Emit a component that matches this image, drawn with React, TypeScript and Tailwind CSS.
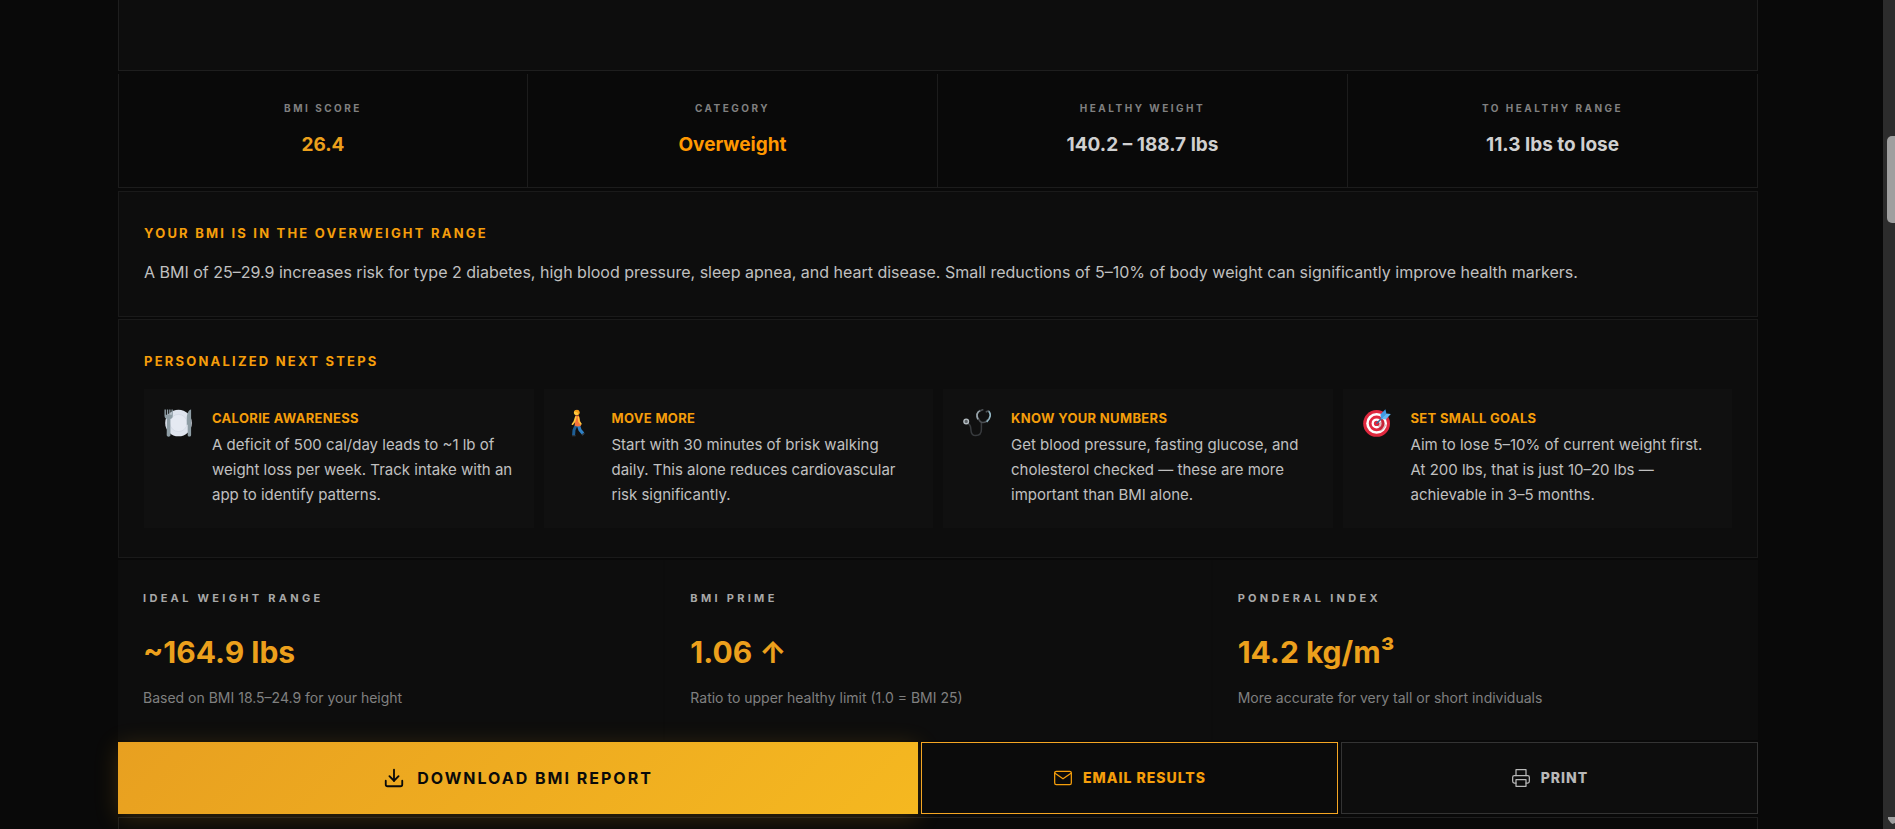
import type { ReactNode } from 'react';
import { FiDownload, FiMail, FiPrinter } from 'react-icons/fi';

interface Stat {
  label: string;
  value: string;
  color: string;
}

interface Step {
  icon: ReactNode;
  title: string;
  text: string;
}

interface Metric {
  label: string;
  value: string;
  note: string;
}

const PlateIcon = () => (
  <svg viewBox="0 0 28 28" className="w-7 h-7" aria-hidden="true">
    <circle cx="14.5" cy="14" r="13.3" fill="#dfe4ee" />
    <circle cx="14.5" cy="14" r="8.6" fill="#e5e9f2" stroke="#d3d9e5" strokeWidth="0.8" />
    <path
      d="M0.5 0.5v6.2c0 1.8 1.1 2.8 2.4 3.2L2.7 26c0 2.2 3.8 2.2 3.8 0L6.3 9.9c1.5-.4 2.5-1.4 2.5-3.2V.5H7.5v5.3h-1V.5H5.2v5.3h-1V.5H2.9v5.3h-1V.5z"
      fill="#8e9da5"
    />
    <path d="M26.8.6c-2.5.8-4 4.6-4 8.8v6.4h.9V26c0 2 3.4 2 3.4 0V.6z" fill="#8e9da5" />
  </svg>
);

const WalkIcon = () => (
  <svg viewBox="0 0 28 28" className="w-7 h-7" aria-hidden="true">
    <path d="M12 16.5 10 21l-.4 5.2" fill="none" stroke="#1f5f96" strokeWidth="3" strokeLinejoin="round" />
    <path d="M14.5 16.5 16 21l3 3.6" fill="none" stroke="#2f80c5" strokeWidth="3.2" strokeLinejoin="round" />
    <path d="M8.2 26.2h3.4v1.1H7.9zM17.6 25.8l2.5-2 .6 1-2.2 2z" fill="#3a4652" />
    <path d="M11.3 6.4h3.6l2.2 9.8c0 1.6-6.4 1.6-6.4 0z" fill="#f4743b" />
    <path d="m11.8 8-1.4 4.6-1.9 2.6" fill="none" stroke="#ffc83d" strokeWidth="1.7" strokeLinecap="round" />
    <path d="m14.4 8.2.6 4.2 2 2.6" fill="none" stroke="#ffc83d" strokeWidth="1.5" strokeLinecap="round" />
    <circle cx="12.6" cy="3.6" r="2.7" fill="#ffc83d" />
    <path d="M10.3 2.8C11 0 15.6.1 15.6 3.6c0 1.2-.7 2-1.2 2.3.1-1.8-.9-3-4.1-3.1z" fill="#f59f1a" />
  </svg>
);

const StethoscopeIcon = () => (
  <svg viewBox="0 0 28 28" className="w-7 h-7" aria-hidden="true">
    <path
      d="M4.5 14.5c3.4 1 3.2 3.3 3.4 6.2.2 3.8 1.8 5.9 4.8 5.9 3.6 0 5.7-2 5.7-6v-7"
      fill="none"
      stroke="#383b3e"
      strokeWidth="1.5"
    />
    <path d="M15.5 9.5c.8 2.6 2.2 4 4.4 4 2.3 0 4-1.2 5-3.4" fill="none" stroke="#4b4f53" strokeWidth="1.5" />
    <path d="M17.3 1.4c-3.3 1.6-4 5.2-2.3 9" fill="none" stroke="#98a4ab" strokeWidth="1.7" />
    <path d="M25.3 1.8c3 2.6 2.6 7.4-1.6 11" fill="none" stroke="#93b6c4" strokeWidth="1.7" />
    <path d="m17.3 1.7 2.4-.9M23.4 2.8l1.8-.9" stroke="#4b4f53" strokeWidth="1.6" strokeLinecap="round" />
    <circle cx="3.2" cy="12.4" r="2.3" fill="#5c6165" stroke="#b4bcc1" strokeWidth="1.4" />
  </svg>
);

const TargetIcon = () => (
  <svg viewBox="0 0 28 28" className="w-7 h-7" aria-hidden="true">
    <circle cx="13.6" cy="14.4" r="13.4" fill="#e0293f" />
    <circle cx="13.6" cy="14.4" r="10.4" fill="#fff" />
    <circle cx="13.6" cy="14.4" r="7.8" fill="#e0293f" />
    <circle cx="13.6" cy="14.4" r="5" fill="#fff" />
    <circle cx="13.6" cy="14.4" r="2.7" fill="#e0293f" />
    <path d="m14.5 15.5 5.5-5 3 6c-1.5 3-3.5 5-5.5 6z" fill="#8f1d2c" opacity=".3" />
    <path d="m13.8 14.3 8-8" stroke="#2f6f9e" strokeWidth="1.5" strokeLinecap="round" />
    <path d="m18 9.9-.6-4.5L22.4.2l1 4.4z" fill="#3f9be8" />
    <path d="m18 9.9 4.8.5 5-5.4-4.4-.4z" fill="#61b8f5" />
  </svg>
);

const stats: Stat[] = [
  { label: 'BMI Score', value: '26.4', color: 'text-[#eca01c]' },
  { label: 'Category', value: 'Overweight', color: 'text-[#ff9800]' },
  { label: 'Healthy Weight', value: '140.2 – 188.7 lbs', color: 'text-[#d0d0d0]' },
  { label: 'To Healthy Range', value: '11.3 lbs to lose', color: 'text-[#d0d0d0]' },
];

const steps: Step[] = [
  {
    icon: <PlateIcon />,
    title: 'Calorie Awareness',
    text: 'A deficit of 500 cal/day leads to ~1 lb of weight loss per week. Track intake with an app to identify patterns.',
  },
  {
    icon: <WalkIcon />,
    title: 'Move More',
    text: 'Start with 30 minutes of brisk walking daily. This alone reduces cardiovascular risk significantly.',
  },
  {
    icon: <StethoscopeIcon />,
    title: 'Know Your Numbers',
    text: 'Get blood pressure, fasting glucose, and cholesterol checked — these are more important than BMI alone.',
  },
  {
    icon: <TargetIcon />,
    title: 'Set Small Goals',
    text: 'Aim to lose 5–10% of current weight first. At 200 lbs, that is just 10–20 lbs — achievable in 3–5 months.',
  },
];

const metrics: Metric[] = [
  { label: 'Ideal Weight Range', value: '~164.9 lbs', note: 'Based on BMI 18.5–24.9 for your height' },
  { label: 'BMI Prime', value: '1.06 ↑', note: 'Ratio to upper healthy limit (1.0 = BMI 25)' },
  { label: 'Ponderal Index', value: '14.2 kg/m³', note: 'More accurate for very tall or short individuals' },
];

export default function App() {
  return (
    <div className="flex h-screen overflow-hidden bg-[#090909] font-['Inter',sans-serif] text-[#c0c0c0]">
      <main className="flex-1 min-w-0 pl-[118px] pr-[125px]">
        {/* end of the gauge panel */}
        <div className="h-[71px] border border-t-0 border-[#1e1e1e] bg-[#0d0d0d]" />

        {/* stats */}
        <section className="mt-[3px] grid grid-cols-4 border-b border-[#1c1c1c]">
          {stats.map(s => (
            <div key={s.label} className="border-r first:border-l border-[#1c1c1c] py-6 text-center">
              <p className="mb-2 text-[10px] leading-[21px] font-bold tracking-[0.25em] uppercase text-[#808080]">{s.label}</p>
              <p className={`text-[19px] leading-9 font-bold ${s.color}`}>{s.value}</p>
            </div>
          ))}
        </section>

        {/* range explanation */}
        <section className="mt-[3px] border border-[#1a1a1a] bg-[#0d0d0d] px-[25px] pt-7 pb-[29px]">
          <h2 className="mb-[11px] text-[13px] leading-[26px] font-bold tracking-[0.17em] uppercase text-[#f59e0b]">
            Your BMI is in the Overweight range
          </h2>
          <p className="text-base leading-[30px]">
            A BMI of 25–29.9 increases risk for type 2 diabetes, high blood pressure, sleep apnea, and heart disease. Small
            reductions of 5–10% of body weight can significantly improve health markers.
          </p>
        </section>

        {/* next steps */}
        <section className="mt-[2px] border border-[#1a1a1a] bg-[#0d0d0d] px-[25px] pt-7 pb-[29px]">
          <h2 className="mb-[15px] text-[13px] leading-[26px] font-bold tracking-[0.17em] uppercase text-[#f59e0b]">
            Personalized Next Steps
          </h2>
          <div className="grid grid-cols-4 gap-[10px]">
            {steps.map(s => (
              <div key={s.title} className="flex gap-5 bg-[#101010] pt-[19px] pr-4 pb-[21px] pl-5">
                <div className="w-7 shrink-0 pt-px">{s.icon}</div>
                <div className="min-w-0">
                  <h3 className="mb-1 text-[13px] leading-5 font-bold tracking-wide uppercase text-[#f59e0b]">{s.title}</h3>
                  <p className="text-[15px] leading-[25px]">{s.text}</p>
                </div>
              </div>
            ))}
          </div>
        </section>

        {/* extra metrics */}
        <section className="mt-[2px] grid grid-cols-3 gap-[2px] bg-[#0c0c0c]">
          {metrics.map(m => (
            <div key={m.label} className="bg-[#0d0d0d] px-[25px] pt-7 pb-[31px]">
              <p className="mb-[15px] text-[11px] leading-5 font-bold tracking-[0.3em] uppercase text-[#a8a8a8]">{m.label}</p>
              <p className="mb-[6px] text-[30px] leading-[58px] font-bold text-[#eca01c]">{m.value}</p>
              <p className="text-sm leading-[22px] text-[#808080]">{m.note}</p>
            </div>
          ))}
        </section>

        {/* actions */}
        <div className="mt-[2px] grid h-[72px] grid-cols-[800fr_417fr_417fr] gap-[3px]">
          <button
            type="button"
            className="flex items-center justify-center gap-3 bg-linear-135 from-[#e8a020] to-[#f5b820] text-base font-bold tracking-[2px] uppercase text-[#0a0a0a] shadow-[0_4px_24px_rgba(232,160,32,0.2)]"
          >
            <FiDownload size={22} />
            Download BMI Report
          </button>
          <button
            type="button"
            className="flex items-center justify-center gap-[10px] border border-[#f5a623] bg-[#0b0b0b] text-sm font-extrabold tracking-[1px] uppercase text-[#f59e0b]"
          >
            <FiMail size={20} strokeWidth={1.5} />
            Email Results
          </button>
          <button
            type="button"
            className="flex items-center justify-center gap-[10px] border border-[#333333] bg-[#0d0d0d] text-sm font-extrabold tracking-[1px] uppercase text-[#b8b8b8]"
          >
            <FiPrinter size={20} strokeWidth={1.5} />
            Print
          </button>
        </div>

        <div className="mt-[3px] h-10 border border-[#1e1e1e]" />
      </main>

      {/* scroll track */}
      <div className="flex w-3 shrink-0 flex-col justify-between bg-[#2c2c2c] pt-[136px] pb-[5px] pl-1">
        <div className="h-[87px] rounded-l-[5px] bg-[#9f9f9f]" />
        <svg viewBox="0 0 8 7" className="h-[7px] w-2" aria-hidden="true">
          <path d="M1 0h7v6L5.5 7 4 6 1 2z" fill="#9f9f9f" />
        </svg>
      </div>
    </div>
  );
}
